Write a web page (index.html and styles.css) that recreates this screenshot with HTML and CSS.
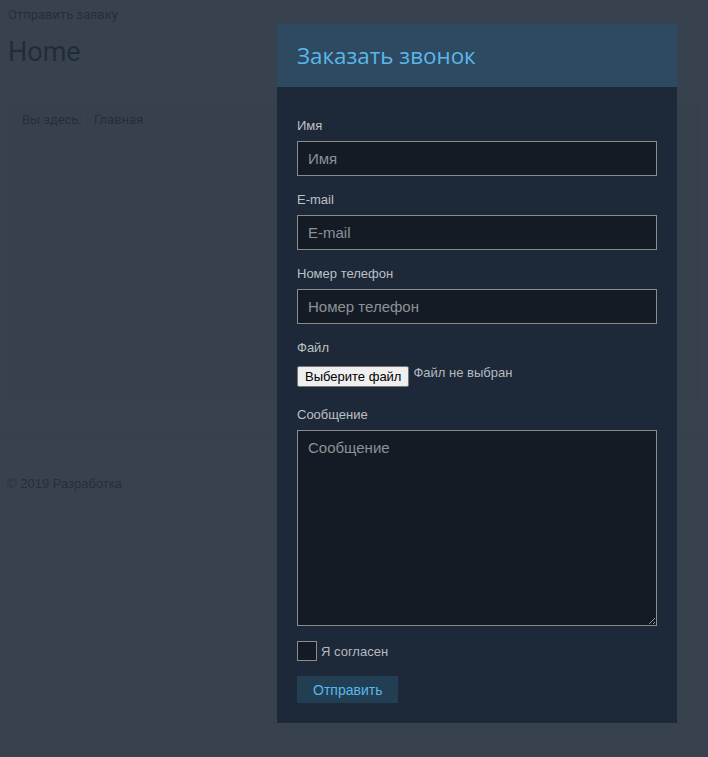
FILE: index.html
```html
<!DOCTYPE html>
<html lang="ru">
<head>
<meta charset="utf-8">
<title>Home</title>
<link rel="stylesheet" href="styles.css">
</head>
<body>
<div class="page">
  <div class="container">
    <a class="top-link" href="#">Отправить заявку</a>
    <h1 class="page-title">Home</h1>
    <div class="breadcrumb"><span class="bc-label">Вы здесь:</span><span class="bc-item">Главная</span></div>
  </div>
  <div class="footer">
    <div class="footer-inner"><p>© 2019 Разработка</p></div>
  </div>
</div>
<div class="overlay">
  <div class="modal">
    <div class="modal-header"><h2 class="modal-title">Заказать звонок</h2></div>
    <form class="modal-body">
      <div class="field">
        <label class="label">Имя</label>
        <input class="input" type="text" placeholder="Имя">
      </div>
      <div class="field">
        <label class="label">E-mail</label>
        <input class="input" type="text" placeholder="E-mail">
      </div>
      <div class="field">
        <label class="label">Номер телефон</label>
        <input class="input" type="text" placeholder="Номер телефон">
      </div>
      <div class="field field-file">
        <label class="label">Файл</label>
        <div class="file-row"><span class="file-btn">Выберите файл</span><span class="file-text">Файл не выбран</span></div>
      </div>
      <div class="field field-msg">
        <label class="label">Сообщение</label>
        <textarea class="textarea" placeholder="Сообщение"></textarea>
      </div>
      <div class="agree"><span class="checkbox"></span><span class="agree-text">Я согласен</span></div>
      <div class="actions"><button class="submit" type="button">Отправить</button></div>
    </form>
  </div>
</div>
</body>
</html>
```
FILE: styles.css
```css
* { box-sizing: border-box; }
html, body { margin: 0; padding: 0; height: 100%; }
body {
  background: #ffffff;
  font-family: "Liberation Sans", Arial, sans-serif;
  color: #333;
}
.container { padding: 0 8px; }
.top-link {
  display: block;
  padding-top: 7px;
  font-family: Roboto, "Liberation Sans", sans-serif;
  font-size: 13px;
  line-height: 16px;
  color: #333;
  text-decoration: none;
}
.page-title {
  margin: 13px 0 0;
  padding-bottom: 11px;
  font-family: Roboto, "Liberation Sans", sans-serif;
  font-weight: 400;
  font-size: 27px;
  line-height: 32px;
  color: #222;
  border-bottom: 1px solid #e6e6e6;
}
.breadcrumb {
  margin-top: 22px;
  padding: 10px 14px;
  height: 300px;
  background: #f5f5f5;
  border-radius: 3px;
  font-family: Roboto, "Liberation Sans", sans-serif;
  font-size: 13px;
  line-height: 16px;
  color: #333;
}
.bc-label { margin-right: 12px; }
.footer {
  margin-top: 35px;
  border-top: 1px solid #e0e0e0;
  padding: 18px 8px 0;
}
.footer-inner {
  border-top: 1px solid #e8e8e8;
  padding-top: 19px;
}
.footer p {
  margin: 0 -1px;
  font-size: 13px;
  line-height: 16px;
  color: #333;
}
.overlay {
  position: fixed;
  inset: 0;
  background: rgba(34, 45, 59, 0.9);
}
.modal {
  position: absolute;
  left: 277px;
  top: 24px;
  width: 400px;
  background: #1d2838;
}
.modal-header {
  background: #2d4a60;
  height: 63px;
  padding: 0 20px;
  display: flex;
  align-items: center;
}
.modal-title {
  margin: 0;
  font-family: "Open Sans", sans-serif;
  font-weight: 400;
  font-size: 22.4px;
  color: #5cb6ec;
}
.modal-body {
  display: flex;
  flex-direction: column;
  padding: 31px 20px 20px;
}
.field { display: flex; flex-direction: column; margin-bottom: 16px; }
.label {
  font-size: 13px;
  line-height: 16px;
  color: #bcc0c5;
  margin-bottom: 7px;
}
.input {
  height: 35px;
  background: #151b24;
  border: 1px solid #8b8b8b;
  padding: 0 10px;
  font-family: "Liberation Sans", Arial, sans-serif;
  font-size: 15px;
  color: #ccc;
  outline: none;
}
.input::placeholder, .textarea::placeholder { color: #8d9197; }
.field-file .label { margin-bottom: 10px; }
.field-file { margin-bottom: 20px; }
.file-row { display: flex; align-items: flex-start; height: 21px; }
.file-btn {
  height: 21px;
  padding: 0 7px;
  background: #efefef;
  border: 1px solid #767676;
  border-radius: 2px;
  font-size: 13px;
  line-height: 19px;
  color: #000;
}
.file-text {
  margin-left: 4px;
  font-size: 13px;
  line-height: 16px;
  margin-top: -1px;
  color: #b6babf;
}
.field-msg { margin-bottom: 15px; }
.textarea {
  height: 196px;
  background: #151b24;
  border: 1px solid #8b8b8b;
  padding: 8px 10px;
  font-family: "Liberation Sans", Arial, sans-serif;
  font-size: 15px;
  line-height: 18px;
  color: #ccc;
  resize: vertical;
  outline: none;
}
.agree { display: flex; align-items: center; margin-bottom: 15px; }
.checkbox {
  width: 20px;
  height: 20px;
  background: #151b24;
  border: 1px solid #8b8b8b;
}
.agree-text {
  margin-left: 4px;
  font-size: 13px;
  color: #b6babf;
}
.actions { display: flex; }
.submit {
  height: 27px;
  padding: 0 16px;
  background: #223e53;
  border: none;
  border-radius: 1px;
  font-family: "Liberation Sans", Arial, sans-serif;
  font-size: 14px;
  color: #5cb6ec;
}
```
